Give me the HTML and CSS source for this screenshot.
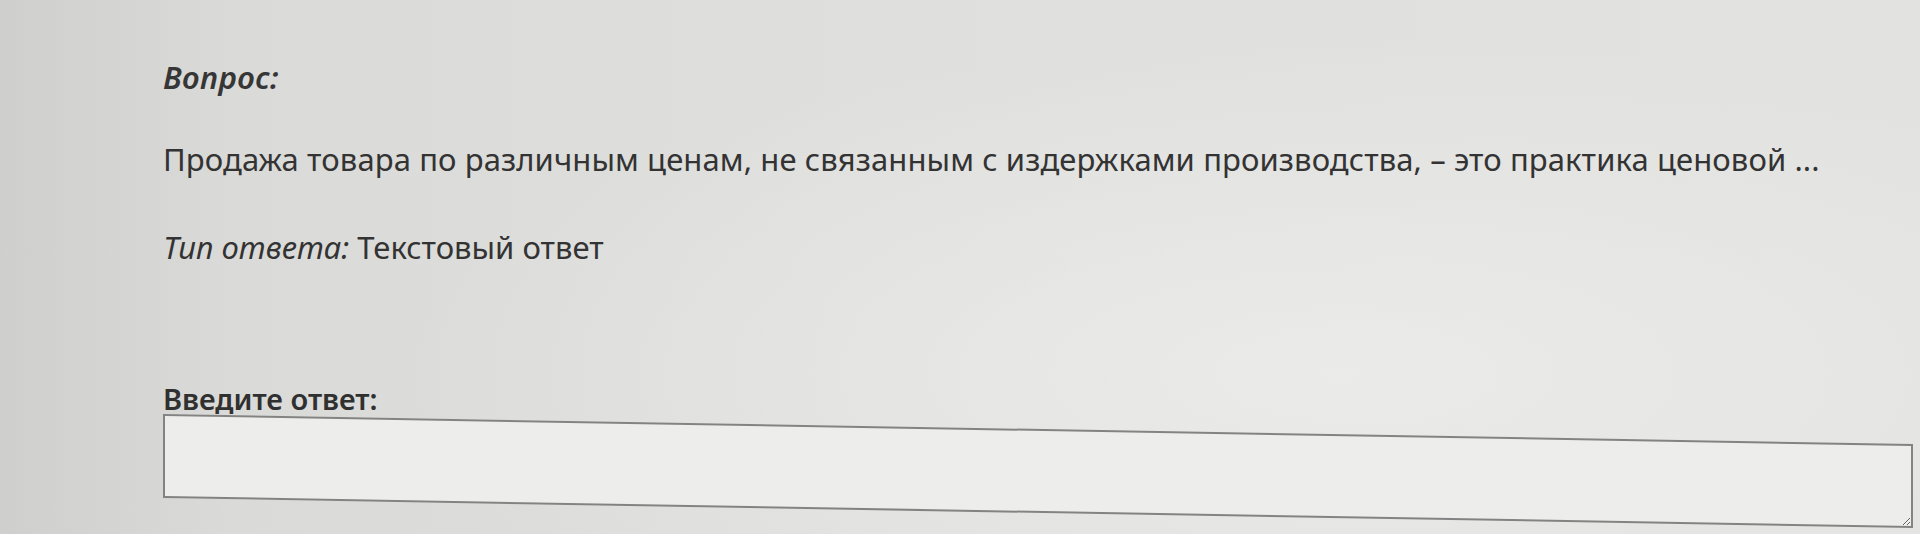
FILE: index.html
```html
<!DOCTYPE html>
<html lang="ru">
<head>
<meta charset="utf-8">
<title>Вопрос</title>
<link rel="stylesheet" href="styles.css">
</head>
<body>
<main class="question">
  <div class="question-title">Вопрос:</div>
  <div class="question-text">Продажа товара по различным ценам, не связанным с издержками производства, – это практика ценовой ...</div>
  <div class="answer-type"><span class="answer-type-label">Тип ответа:</span> Текстовый ответ</div>
  <label class="answer-label" for="answer">Введите ответ:</label>
  <textarea id="answer" class="answer-field"></textarea>
</main>
</body>
</html>
```
FILE: styles.css
```css
html, body {
  margin: 0;
  height: 100%;
}

body {
  background:
    radial-gradient(ellipse 70% 90% at 70% 70%, rgba(236, 236, 234, 0.9), rgba(236, 236, 234, 0) 70%),
    linear-gradient(90deg, #cfcfcd 0%, #dadad8 12%, #dfdfdd 45%, #e2e2e0 100%);
  font-family: "Noto Sans", "Open Sans", sans-serif;
  color: #333;
  overflow: hidden;
}

.question {
  display: flex;
  flex-direction: column;
  align-items: flex-start;
  padding: 60px 8px 0 163px;
}

.question-title {
  font-size: 31px;
  font-style: italic;
  font-weight: 600;
  letter-spacing: 0.4px;
  line-height: 34px;
  color: #363636;
}

.question-text {
  margin-top: 48px;
  font-size: 31px;
  letter-spacing: 0.1px;
  line-height: 34px;
  white-space: nowrap;
}

.answer-type {
  margin-top: 54px;
  font-size: 31px;
  line-height: 34px;
}

.answer-type-label {
  font-style: italic;
}

.answer-label {
  margin-top: 120px;
  font-size: 29px;
  font-weight: 600;
  line-height: 30px;
  color: #303030;
}

.answer-field {
  margin-top: 0;
  box-sizing: border-box;
  width: 1750px;
  height: 84px;
  border: 2px solid #838383;
  background: #ededeb;
  outline: none;
  transform: skewY(0.98deg);
  transform-origin: left top;
}
```
